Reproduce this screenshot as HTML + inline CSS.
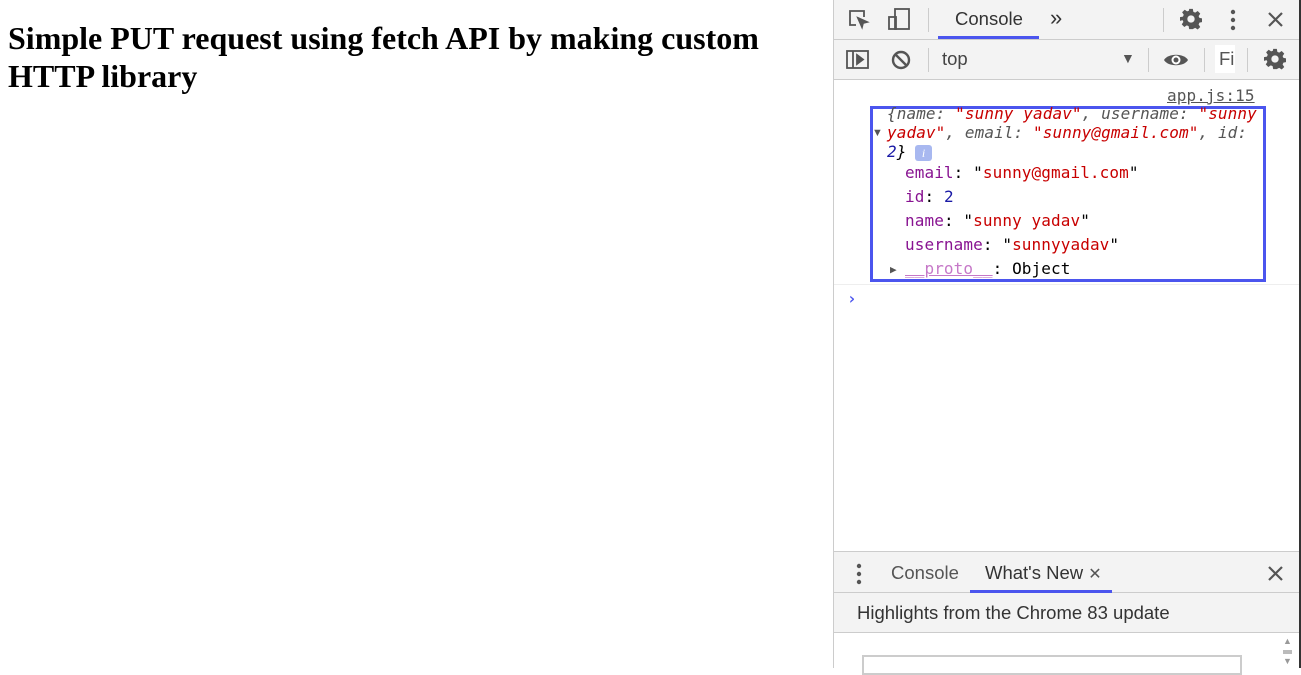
<!DOCTYPE html>
<html><head><style>
*{margin:0;padding:0;box-sizing:border-box}
body{width:1301px;height:668px;overflow:hidden;background:#fff;position:relative;font-family:"Liberation Sans",sans-serif}
h1{position:absolute;left:8px;top:19px;width:800px;font:bold 32px/38px "Liberation Serif",serif;color:#000}
#dt{position:absolute;left:833px;top:0;width:468px;height:668px;border-left:1px solid #ccc;background:#fff}
.tb{position:absolute;left:0;width:466px;background:#f3f3f3;border-bottom:1px solid #ccc}
.mono{font-family:"DejaVu Sans Mono",monospace;font-size:16px;letter-spacing:0.1px;position:absolute;white-space:pre}
.t{position:absolute;font-size:18.5px;color:#333}
.r{color:#c80000}.p{color:#881391}.b{color:#1a1aa6}.g{color:#555}
</style></head><body>
<h1>Simple PUT request using fetch API by making custom HTTP library</h1>
<svg width="0" height="0" style="position:absolute"><defs><symbol id="gear" viewBox="0 0 24 24"><path fill="#555" d="M10 1h4l.6 3.2 2 .9 2.7-1.8 2.8 2.8-1.8 2.7.9 2 3.2.6v4l-3.2.6-.9 2 1.8 2.7-2.8 2.8-2.7-1.8-2 .9L14 23h-4l-.6-3.2-2-.9-2.7 1.8-2.8-2.8 1.8-2.7-.9-2L0 14v-4l3.2-.6.9-2-1.8-2.7 2.8-2.8 2.7 1.8 2-.9zM12 8a4 4 0 100 8 4 4 0 000-8z"/></symbol></defs></svg>
<div id="dt">
<div class="tb" style="top:0;height:40px">
 <svg style="position:absolute;left:14px;top:9px" width="22" height="22" viewBox="0 0 22 22" fill="none" stroke="#555" stroke-width="1.8"><path d="M8 16H2V2h14v6"/><path d="M10 9l9 4-4 1-1 4z" fill="#555"/></svg>
 <svg style="position:absolute;left:53px;top:7px" width="24" height="24" viewBox="0 0 24 24" fill="none" stroke="#555" stroke-width="1.8"><rect x="8" y="2" width="14" height="20"/><rect x="2" y="10" width="7" height="12"/></svg>
 <div style="position:absolute;left:94px;top:8px;width:1px;height:24px;background:#ccc"></div>
 <div class="t" style="left:121px;top:8px">Console</div>
 <div style="position:absolute;left:104px;top:36px;width:101px;height:3px;background:#4b55ee"></div>
 <div class="t" style="left:216px;top:5px;font-size:22px">»</div>
 <div style="position:absolute;left:329px;top:8px;width:1px;height:24px;background:#ccc"></div>
 <svg style="position:absolute;left:346px;top:8px" width="22" height="22"><use href="#gear"/></svg>
 <svg style="position:absolute;left:396px;top:9px" width="6" height="22"><circle cx="3" cy="3" r="2.2" fill="#555"/><circle cx="3" cy="11" r="2.2" fill="#555"/><circle cx="3" cy="19" r="2.2" fill="#555"/></svg>
 <svg style="position:absolute;left:434px;top:12px" width="15" height="15" stroke="#555" stroke-width="2.2"><path d="M1 1l13 13M14 1L1 14"/></svg>
</div>
<div class="tb" style="top:40px;height:40px">
 <svg style="position:absolute;left:12px;top:9px" width="24" height="22" viewBox="0 0 24 22" fill="none" stroke="#555" stroke-width="1.8"><rect x="1" y="2" width="21" height="17"/><path d="M7 2v17"/><path d="M11 6l6 4.5-6 4.5z" fill="#555"/></svg>
 <svg style="position:absolute;left:57px;top:10px" width="20" height="20" viewBox="0 0 20 20" fill="none" stroke="#555" stroke-width="2.4"><circle cx="10" cy="10" r="8"/><path d="M4.5 4.5l11 11"/></svg>
 <div style="position:absolute;left:94px;top:8px;width:1px;height:24px;background:#ccc"></div>
 <div class="t" style="left:108px;top:8px;color:#444">top</div>
 <div class="t" style="left:287px;top:10px;font-size:14px;color:#555">▼</div>
 <div style="position:absolute;left:314px;top:8px;width:1px;height:24px;background:#ccc"></div>
 <svg style="position:absolute;left:329px;top:11px" width="26" height="18" viewBox="0 0 26 18"><path d="M1 9C5 2 21 2 25 9 21 16 5 16 1 9z" fill="#555"/><circle cx="13" cy="9" r="4.5" fill="#fff"/><circle cx="13" cy="9" r="2.5" fill="#555"/></svg>
 <div style="position:absolute;left:370px;top:8px;width:1px;height:24px;background:#ccc"></div>
 <div style="position:absolute;left:381px;top:5px;width:20px;height:28px;background:#fff"></div>
 <div class="t" style="left:385px;top:8px;color:#555">Fi</div>
 <div style="position:absolute;left:413px;top:8px;width:1px;height:24px;background:#ccc"></div>
 <svg style="position:absolute;left:430px;top:8px" width="22" height="22"><use href="#gear"/></svg>
</div>
<div class="mono" style="left:333px;top:86px;color:#555;text-decoration:underline">app.js:15</div>
<div style="position:absolute;left:36px;top:106px;width:396px;height:176px;border:3px solid #4b55ee"></div>
<div class="mono g" style="left:53px;top:104px;font-style:italic">{name: <span class="r">"sunny yadav"</span>, username: <span class="r">"sunny</span></div>
<div class="mono g" style="left:53px;top:123px;font-style:italic"><span class="r">yadav"</span>, email: <span class="r">"sunny@gmail.com"</span>, id:</div>
<div class="mono" style="left:53px;top:142px;font-style:italic"><span class="b">2</span>}</div>
<div style="position:absolute;left:81px;top:145px;width:17px;height:16px;background:#a8b8f0;border-radius:3px;color:#fff;font:italic 12px serif;text-align:center;line-height:16px">i</div>
<div class="t" style="left:38px;top:127px;font-size:11px;color:#555">▼</div>
<div class="mono" style="left:71px;top:163px"><span class="p">email</span>: "<span class="r">sunny@gmail.com</span>"</div>
<div class="mono" style="left:71px;top:187px"><span class="p">id</span>: <span class="b">2</span></div>
<div class="mono" style="left:71px;top:211px"><span class="p">name</span>: "<span class="r">sunny yadav</span>"</div>
<div class="mono" style="left:71px;top:235px"><span class="p">username</span>: "<span class="r">sunnyyadav</span>"</div>
<div class="mono" style="left:56px;top:263px;font-size:11px;color:#555">▶</div>
<div class="mono" style="left:71px;top:259px"><span style="color:#c678c8;text-decoration:underline">__proto__</span>: Object</div>
<div style="position:absolute;left:0;top:284px;width:466px;height:1px;background:#eee"></div>
<div class="mono" style="left:13px;top:289px;color:#4b55ee;font-weight:bold">›</div>
<div class="tb" style="top:551px;height:42px;border-top:1px solid #ccc">
 <svg style="position:absolute;left:22px;top:11px" width="6" height="22"><circle cx="3" cy="3" r="2.2" fill="#555"/><circle cx="3" cy="11" r="2.2" fill="#555"/><circle cx="3" cy="19" r="2.2" fill="#555"/></svg>
 <div class="t" style="left:57px;top:10px;color:#555">Console</div>
 <div class="t" style="left:151px;top:10px">What's New <span style="color:#555;font-size:16px">✕</span></div>
 <div style="position:absolute;left:136px;top:38px;width:142px;height:3px;background:#4b55ee"></div>
 <svg style="position:absolute;left:434px;top:14px" width="15" height="15" stroke="#555" stroke-width="2.2"><path d="M1 1l13 13M14 1L1 14"/></svg>
</div>
<div class="tb" style="top:593px;height:40px">
 <div class="t" style="left:23px;top:9px">Highlights from the Chrome 83 update</div>
</div>
<div style="position:absolute;left:28px;top:655px;width:380px;height:20px;border:2px solid #ccc"></div>
<div style="position:absolute;left:449px;top:636px;font-size:9px;color:#999;line-height:10px">▲<br><span style="display:inline-block;width:9px;height:4px;background:#bbb"></span><br>▼</div>
<div style="position:absolute;left:465px;top:0;width:2px;height:668px;background:#333"></div>
</div>
</body></html>
